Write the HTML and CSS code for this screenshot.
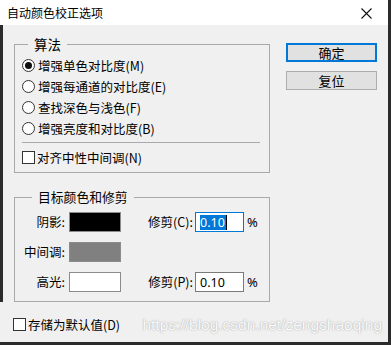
FILE: index.html
```html
<!DOCTYPE html>
<html lang="zh-CN">
<head>
<meta charset="utf-8">
<title>自动颜色校正选项</title>
<link rel="stylesheet" href="styles.css">
</head>
<body>
<div class="dialog">
  <div class="titlebar">
    <span class="title">自动颜色校正选项</span>
    <svg class="close" width="11" height="11" viewBox="0 0 11 11"><path d="M0.5 0.5 L10.5 10.5 M10.5 0.5 L0.5 10.5" stroke="#111" stroke-width="1.1" fill="none"/></svg>
  </div>
  <div class="main">
    <div class="left">
      <fieldset class="group group-algo">
        <legend class="legend legend-algo">算法</legend>
        <div class="options">
          <div class="row"><span class="radio checked"></span><span>增强单色对比度(M)</span></div>
          <div class="row"><span class="radio"></span><span>增强每通道的对比度(E)</span></div>
          <div class="row"><span class="radio"></span><span>查找深色与浅色(F)</span></div>
          <div class="row"><span class="radio"></span><span>增强亮度和对比度(B)</span></div>
        </div>
        <div class="separator"></div>
        <div class="row row-check"><span class="check"></span><span>对齐中性中间调(N)</span></div>
      </fieldset>
      <fieldset class="group group-target">
        <legend class="legend legend-target">目标颜色和修剪</legend>
        <div class="grid">
          <span class="lbl">阴影:</span>
          <span class="swatch swatch-black"></span>
          <span class="lbl lbl-clip">修剪(C):</span>
          <span class="field field-focus"><span class="sel">0.10</span><span class="caret"></span></span>
          <span class="pct">%</span>

          <span class="lbl">中间调:</span>
          <span class="swatch swatch-grey"></span>
          <span></span><span></span><span></span>

          <span class="lbl">高光:</span>
          <span class="swatch swatch-white"></span>
          <span class="lbl lbl-clip">修剪(P):</span>
          <span class="field"><span class="val">0.10</span></span>
          <span class="pct">%</span>
        </div>
      </fieldset>
    </div>
    <div class="right">
      <div class="btn btn-default">确定</div>
      <div class="btn">复位</div>
    </div>
  </div>
  <div class="footer">
    <span class="check"></span><span>存储为默认值(D)</span>
    <span class="watermark">https://blog.csdn.net/zengshaoqing</span>
  </div>
</div>
</body>
</html>
```
FILE: styles.css
```css
* { box-sizing: border-box; }
html, body {
  margin: 0;
  padding: 0;
  width: 391px;
  height: 345px;
  overflow: hidden;
  background: #2b2b2b;
}
body {
  font-family: "Noto Sans CJK SC", "Microsoft YaHei", sans-serif;
  font-size: 12.5px;
  color: #000;
}
.dialog {
  width: 388px;
  height: 342px;
  background: #f0f0f0;
  display: flex;
  flex-direction: column;
}
.titlebar {
  height: 25px;
  flex: none;
  background: #fff;
  display: flex;
  align-items: center;
  padding-left: 7px;
  padding-right: 16px;
}
.title {
  font-size: 12px;
  line-height: 16px;
  color: #000;
}
.close { margin-left: auto; margin-top: 1px; }

.main {
  display: flex;
  align-items: flex-start;
  border-left: 3px solid #2b2b2b;
  padding-left: 11px;
  padding-top: 11px;
}
.left { width: 256px; flex: none; }
.right {
  margin-left: 16px;
  padding-top: 7px;
  display: flex;
  flex-direction: column;
}

.group {
  margin: 0;
  padding: 0;
  border: 1px solid #a9a9a9;
  min-inline-size: 0;
  width: 256px;
}
.legend {
  padding: 0 6px;
  font-size: 12.5px;
  line-height: 16px;
  height: 16px;
}
.legend-algo { margin-left: 13px; font-size: 13.5px; }
.legend-target { margin-left: 17px; font-size: 12.8px; }

.options { padding-top: 3px; }
.row {
  height: 21px;
  display: flex;
  align-items: center;
  padding-left: 7px;
  line-height: 16px;
}
.radio {
  width: 13px;
  height: 13px;
  border: 1px solid #333;
  border-radius: 50%;
  background: #fff;
  margin-right: 3px;
  flex: none;
  display: flex;
  align-items: center;
  justify-content: center;
}
.radio.checked::after {
  content: "";
  width: 7px;
  height: 7px;
  border-radius: 50%;
  background: #111;
}
.check {
  width: 13px;
  height: 13px;
  border: 1px solid #333;
  background: #fff;
  margin-right: 2px;
  flex: none;
}
.separator {
  height: 1px;
  background: #a9a9a9;
  margin: 3px 9px 0 7px;
}
.row-check { margin-top: 4px; margin-bottom: 4px; }

.group-target { margin-top: 16px; }
.grid {
  display: grid;
  grid-template-columns: 52px 54px 74px 49px auto;
  grid-auto-rows: 20px;
  row-gap: 10px;
  align-items: center;
  padding: 7px 0 9px 0;
}
.lbl {
  text-align: right;
  padding-right: 2px;
  line-height: 16px;
  white-space: nowrap;
}
.swatch {
  justify-self: end;
  width: 52px;
  height: 20px;
  border: 1px solid #8c8c8c;
}
.swatch-black { background: #000; }
.swatch-grey { background: #808080; }
.swatch-white { background: #fff; }
.field {
  width: 49px;
  height: 20px;
  border: 1px solid #7a7a7a;
  background: #fff;
  display: flex;
  align-items: center;
  padding-left: 4px;
  font-family: "Noto Sans", "Open Sans", sans-serif;
  font-size: 12.5px;
}
.field-focus { border-color: #0078d7; }
.sel {
  background: #0078d7;
  color: #fff;
  line-height: 15px;
  padding: 0 1px 0 0;
}
.caret {
  width: 1px;
  height: 15px;
  background: #000;
}
.val { line-height: 15px; }
.pct {
  padding-left: 3px;
  font-family: "Noto Sans", "Open Sans", sans-serif;
  font-size: 13px;
  line-height: 16px;
}

.btn {
  width: 91px;
  height: 19px;
  background: #e1e1e1;
  border: 1px solid #adadad;
  display: flex;
  align-items: center;
  justify-content: center;
  line-height: 16px;
  font-size: 13px;
}
.btn-default { border: 2px solid #0078d7; }
.btn + .btn { margin-top: 9px; }

.footer {
  margin-top: 12px;
  height: 21px;
  display: flex;
  align-items: center;
  padding-left: 13px;
  padding-right: 6px;
  line-height: 16px;
}
.watermark {
  margin-left: auto;
  font-family: "Liberation Sans", Arial, sans-serif;
  font-size: 15.5px;
  color: #fafafa;
  text-shadow: 0 0 1px #a8a8a8, 0 0 2px #c8c8c8;
  white-space: nowrap;
}
```
